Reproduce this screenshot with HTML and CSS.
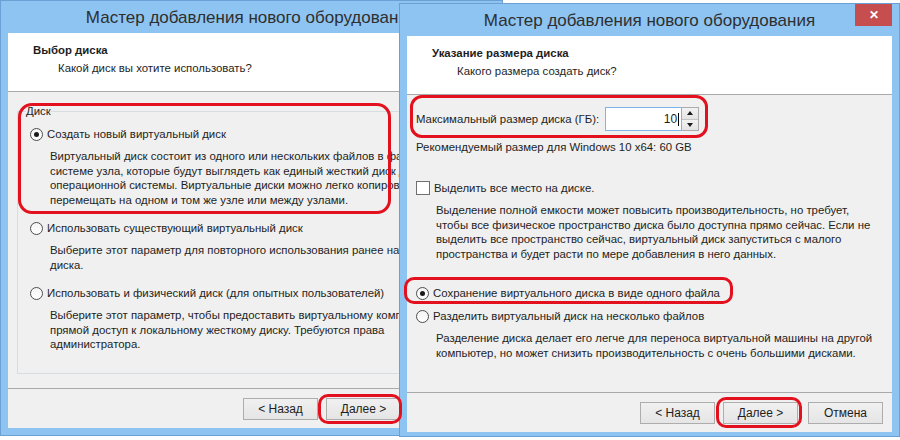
FILE: index.html
```html
<!DOCTYPE html>
<html lang="ru">
<head>
  <meta charset="UTF-8" />
  <title>Мастер добавления нового оборудования</title>
  <link rel="stylesheet" href="styles.css">
</head>
<body>
  <div class="desktop">

    <!-- Step 1: disk choice (behind) -->
    <section class="window window-back">
      <header class="titlebar">
        <span class="title">Мастер добавления нового оборудования</span>
      </header>
      <div class="client">
        <div class="wizard-head">
          <div class="head-title">Выбор диска</div>
          <div class="head-sub">Какой диск вы хотите использовать?</div>
        </div>
        <div class="wizard-body">
          <fieldset class="group">
            <legend>Диск</legend>
            <label class="option first"><span class="radio checked"></span>Создать новый виртуальный диск</label>
            <p class="hint">Виртуальный диск состоит из одного или нескольких файлов в файловой<br>системе узла, которые будут выглядеть как единый жесткий диск для гостевой<br>операционной системы. Виртуальные диски можно легко копировать или<br>перемещать на одном и том же узле или между узлами.</p>
            <label class="option"><span class="radio"></span>Использовать существующий виртуальный диск</label>
            <p class="hint">Выберите этот параметр для повторного использования ранее настроенного<br>диска.</p>
            <label class="option"><span class="radio"></span>Использовать и физический диск (для опытных пользователей)</label>
            <p class="hint">Выберите этот параметр, чтобы предоставить виртуальному компьютеру<br>прямой доступ к локальному жесткому диску. Требуются права<br>администратора.</p>
          </fieldset>
        </div>
        <div class="wizard-foot">
          <button class="btn">&lt; Назад</button>
          <button class="btn">Далее &gt;</button>
          <button class="btn btn-cancel">Отмена</button>
        </div>
      </div>
    </section>

    <!-- Step 2: disk size (front) -->
    <section class="window window-front">
      <header class="titlebar">
        <span class="title">Мастер добавления нового оборудования</span>
        <span class="close">&#x2715;</span>
      </header>
      <div class="client">
        <div class="wizard-head">
          <div class="head-title">Указание размера диска</div>
          <div class="head-sub">Какого размера создать диск?</div>
        </div>
        <div class="wizard-body plain">
          <div class="size-row">
            <span>Максимальный размер диска (ГБ):</span>
            <div class="spin">
              <div class="spin-field">10<i class="caret"></i></div>
              <div class="spin-buttons">
                <span class="spin-up"></span>
                <span class="spin-down"></span>
              </div>
            </div>
          </div>
          <div class="recommend">Рекомендуемый размер для Windows 10 x64: 60 GB</div>
          <label class="option check-row"><span class="checkbox"></span>Выделить все место на диске.</label>
          <p class="hint">Выделение полной емкости может повысить производительность, но требует,<br>чтобы все физическое пространство диска было доступна прямо сейчас. Если не<br>выделить все пространство сейчас, виртуальный диск запуститься с малого<br>пространства и будет расти по мере добавления в него данных.</p>
          <label class="option single"><span class="radio checked"></span>Сохранение виртуального диска в виде одного файла</label>
          <label class="option split"><span class="radio"></span>Разделить виртуальный диск на несколько файлов</label>
          <p class="hint">Разделение диска делает его легче для переноса виртуальной машины на другой<br>компьютер, но может снизить производительность с очень большими дисками.</p>
        </div>
        <div class="wizard-foot">
          <button class="btn">&lt; Назад</button>
          <button class="btn">Далее &gt;</button>
          <button class="btn btn-cancel">Отмена</button>
        </div>
      </div>
    </section>

    <!-- red marker rings drawn over the dialogs -->
    <div class="mark mark-new-disk"></div>
    <div class="mark mark-next-back"></div>
    <div class="mark mark-size"></div>
    <div class="mark mark-single"></div>
    <div class="mark mark-next-front"></div>
  </div>
</body>
</html>
```

FILE: styles.css
```css
body {
  margin: 0;
  background: #ffffff;
  font-family: "Liberation Sans", Arial, sans-serif;
  font-size: 11.4px;
  color: #1e1e1e;
}

.desktop {
  position: relative;
  width: 900px;
  height: 440px;
  overflow: hidden;
}

/* window frame */
.window {
  position: absolute;
  box-sizing: border-box;
  display: flex;
  flex-direction: column;
  background: #8dc4f2;
  border: 1px solid #6c9fd3;
  padding: 0 7px 7px;
  overflow: hidden;
}

.window-back {
  left: 0;
  top: 0;
  width: 503px;
  height: 436px;
  z-index: 1;
}

.window-front {
  left: 399px;
  top: 3px;
  width: 501px;
  height: 434px;
  padding-bottom: 4px;
  z-index: 2;
}

.titlebar {
  position: relative;
  height: 32px;
  flex: none;
  display: flex;
  align-items: center;
  justify-content: center;
}

.title {
  font-size: 17px;
  color: #2f2f2f;
  white-space: nowrap;
  margin-top: 2px;
}

.close {
  position: absolute;
  right: 0;
  top: 0;
  width: 37px;
  height: 22px;
  background: #c74e4e;
  color: #ffffff;
  font-size: 12px;
  font-weight: bold;
  display: flex;
  align-items: center;
  justify-content: center;
}

.client {
  flex: 1;
  display: flex;
  flex-direction: column;
  background: #f0f0f0;
  min-height: 0;
}

/* wizard header */
.wizard-head {
  flex: none;
  height: 59px;
  box-sizing: border-box;
  background: #ffffff;
  border-bottom: 1px solid #a9a9a9;
  padding: 10px 0 0 25px;
}

.head-title {
  font-weight: bold;
  line-height: 14px;
  white-space: nowrap;
}

.head-sub {
  margin: 4px 0 0 25px;
  line-height: 14px;
  white-space: nowrap;
}

.wizard-body {
  flex: 1;
  padding: 0 0 0 9px;
  display: flex;
  flex-direction: column;
}

.wizard-body.plain {
  padding-top: 12px;
}

/* group box */
.group {
  margin: 12px 0 0 0;
  padding: 0 0 0 12px;
  width: 560px;
  height: 270px;
  box-sizing: border-box;
  border: 1px solid #d8dde2;
  display: flex;
  flex-direction: column;
}

.group legend {
  padding: 0;
  margin-left: -4px;
  line-height: 14px;
}

.option {
  display: flex;
  align-items: center;
  height: 16px;
  white-space: nowrap;
  margin-top: 13px;
}

.option.first {
  margin-top: 8px;
}

.hint {
  margin: 7px 0 0 20px;
  line-height: 14.5px;
  white-space: nowrap;
}

.radio {
  width: 11px;
  height: 11px;
  border: 1px solid #4d4d4d;
  border-radius: 50%;
  background: linear-gradient(#f4f4f4, #ffffff);
  margin-right: 4px;
  display: flex;
  align-items: center;
  justify-content: center;
  flex: none;
}

.radio.checked::after {
  content: "";
  width: 5px;
  height: 5px;
  border-radius: 50%;
  background: #1a1a1a;
}

.checkbox {
  width: 12px;
  height: 12px;
  border: 1px solid #707070;
  background: #ffffff;
  margin-right: 4px;
  flex: none;
}

/* size input with spinner */
.size-row {
  display: flex;
  align-items: center;
  gap: 6px;
  height: 24px;
}

.spin {
  display: flex;
  height: 24px;
}

.spin-field {
  width: 77px;
  box-sizing: border-box;
  border: 1px solid #7eb4ea;
  background: #ffffff;
  display: flex;
  align-items: center;
  justify-content: flex-end;
  padding-right: 2px;
  font-size: 12px;
}

.caret {
  width: 1px;
  height: 13px;
  background: #000000;
  margin-left: 1px;
}

.spin-buttons {
  width: 17px;
  display: flex;
  flex-direction: column;
  border: 1px solid #acacac;
  border-left: 0;
  box-sizing: border-box;
}

.spin-up,
.spin-down {
  flex: 1;
  background: linear-gradient(#f2f2f2, #e3e3e3);
  display: flex;
  align-items: center;
  justify-content: center;
}

.spin-up {
  border-bottom: 1px solid #c4c4c4;
}

.spin-up::after {
  content: "";
  border: 3px solid transparent;
  border-bottom: 4px solid #1a1a1a;
  border-top: 0;
}

.spin-down::after {
  content: "";
  border: 3px solid transparent;
  border-top: 4px solid #1a1a1a;
  border-bottom: 0;
}

.recommend {
  margin-top: 9px;
  line-height: 14px;
}

.check-row {
  margin-top: 26px;
}

.hint + .single {
  margin-top: 24px;
}

.option.split {
  margin-top: 7px;
}

/* footer with buttons */
.wizard-foot {
  height: 40px;
  flex: none;
  box-sizing: border-box;
  border-top: 1px solid #a9a9a9;
  display: flex;
  align-items: center;
  justify-content: flex-end;
  padding-right: 9px;
}

.btn {
  width: 75px;
  height: 22px;
  margin-left: 8px;
  border: 1px solid #adadad;
  background: linear-gradient(#f0f0f0, #e5e5e5);
  font-family: inherit;
  font-size: 12px;
  color: #1e1e1e;
  padding: 0;
}

.btn-cancel {
  margin-left: 10px;
}

/* red highlight rings */
.mark {
  position: absolute;
  z-index: 5;
  box-sizing: border-box;
  border: 3px solid #e3101d;
  border-radius: 12px;
}

.mark-new-disk {
  left: 18px;
  top: 103px;
  width: 373px;
  height: 111px;
  border-radius: 14px;
}

.mark-next-back {
  left: 318px;
  top: 394px;
  width: 84px;
  height: 30px;
  border-radius: 10px;
}

.mark-size {
  left: 410px;
  top: 95px;
  width: 298px;
  height: 43px;
}

.mark-single {
  left: 404px;
  top: 277px;
  width: 329px;
  height: 27px;
  border-radius: 10px;
}

.mark-next-front {
  left: 716px;
  top: 397px;
  width: 86px;
  height: 31px;
  border-radius: 10px;
}
```
